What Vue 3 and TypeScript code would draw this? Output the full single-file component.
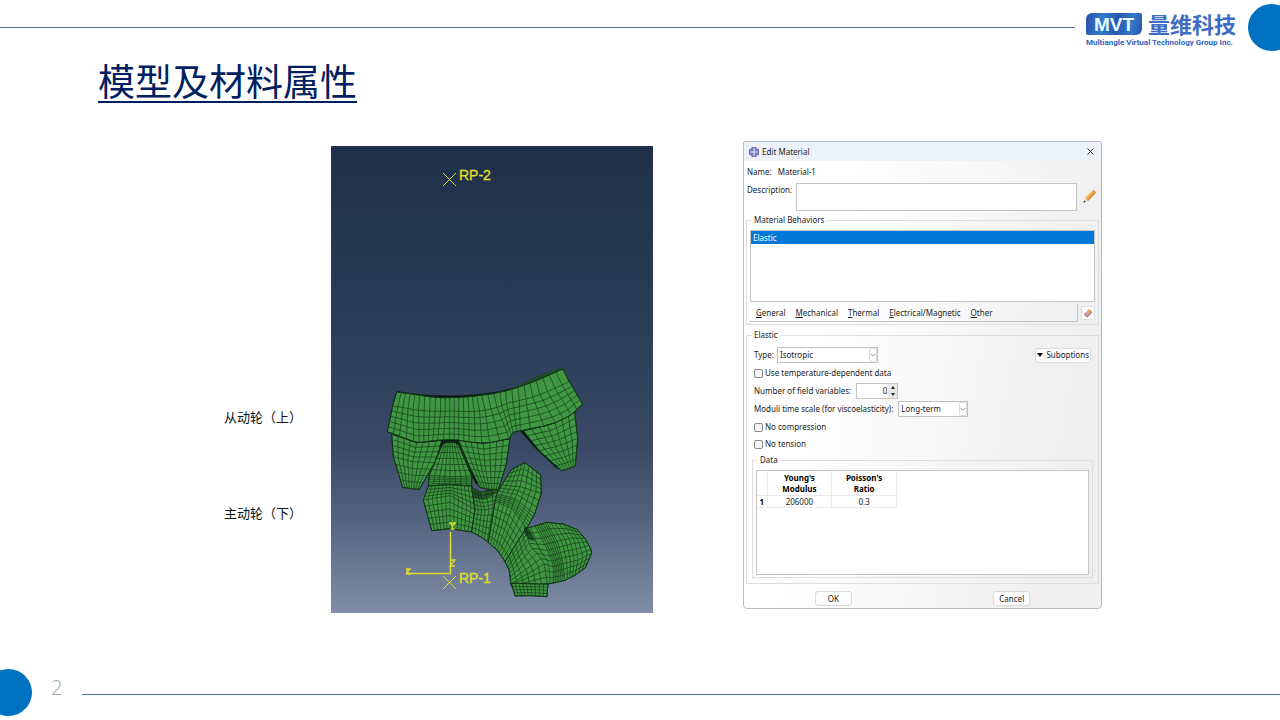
<script setup lang="ts">
import { ref } from 'vue'

type Pt = [number, number]
interface Patch { rows: Pt[][]; cols: number; steps: number[] }

const description = ref('')
const elasticType = ref('Isotropic')
const timeScale = ref('Long-term')
const fieldVars = ref(0)
const menus = ['General', 'Mechanical', 'Thermal', 'Electrical/Magnetic', 'Other']

// Each patch runs through key curves, split into cols x steps cells
const upper: Patch[] = [
  { cols: 8, steps: [4, 4], rows: [[[35,222],[110,248],[188,241]], [[40,290],[98,305],[164,308]], [[68,382],[95,386],[118,388]]] },
  { cols: 8, steps: [4, 4], rows: [[[235,240],[310,250],[390,236]], [[264,310],[315,318],[378,316]], [[300,383],[328,388],[355,389]]] },
  { cols: 7, steps: [4, 4], rows: [[[430,212],[515,193],[584,154]], [[478,272],[535,258],[593,235]], [[545,332],[566,326],[586,318]]] },
  { cols: 31, steps: [1, 5], rows: [
    [[50,96],[80,100],[110,104],[145,110],[180,113],[210,113],[240,112],[270,110],[300,106],[340,101],[380,92],[420,80],[460,65],[504,47],[548,27]],
    [[38,138],[72,143],[106,150],[143,153],[180,154],[210,153],[240,154],[275,155],[310,152],[350,143],[382,130],[425,120],[470,108],[520,87],[568,65]],
    [[22,215],[62,230],[110,248],[140,245],[170,241],[210,239],[240,241],[275,247],[320,250],[388,236],[400,216],[425,212],[515,193],[570,168],[608,132]]] },
]

const lower: Patch[] = [
  { cols: 8, steps: [6, 5], rows: [[[130,-25],[150,-30],[172,-25]], [[88,76],[150,80],[215,78]], [[85,108],[150,104],[215,108]]] },
  { cols: 12, steps: [4, 5], rows: [[[85,108],[150,104],[215,108]], [[70,150],[150,137],[225,178]], [[95,242],[150,236],[215,246]]] },
  { cols: 6, steps: [5, 5], rows: [[[215,112],[240,127],[295,115]], [[225,178],[255,180],[290,172]], [[215,246],[245,262],[270,280]]] },
  { cols: 8, steps: [4, 3, 5, 6], rows: [
    [[335,58],[375,38],[422,75]], [[305,105],[360,110],[424,130]], [[290,132],[345,145],[404,192]],
    [[285,155],[335,175],[380,235]], [[265,278],[292,301],[315,335]]] },
  { cols: 10, steps: [6, 2, 6, 4, 3], rows: [
    [[315,335],[328,362],[332,400],[335,410]], [[378,235],[388,285],[432,335],[442,402]], [[405,228],[438,290],[460,345],[460,399]],
    [[440,217],[475,280],[488,335],[495,391]], [[490,222],[522,268],[535,325],[525,376]], [[530,238],[557,268],[577,305],[556,353]]] },
  { cols: 9, steps: [4], rows: [[[334,400],[385,401],[444,402]], [[345,438],[390,437],[441,440]]] },
]

function sample(row: Pt[], t: number): Pt {
  const s = Math.min(t * (row.length - 1), row.length - 1.0001)
  const i = Math.floor(s)
  const f = s - i
  const a = row[i]
  const b = row[i + 1]
  return [a[0] + (b[0] - a[0]) * f, a[1] + (b[1] - a[1]) * f]
}

function build(p: Patch, ox: number, oy: number) {
  const levels: Pt[][] = []
  for (let r = 0; r < p.rows.length - 1; r++) {
    for (let k = r === 0 ? 0 : 1; k <= p.steps[r]; k++) {
      const f = k / p.steps[r]
      const level: Pt[] = []
      for (let c = 0; c <= p.cols; c++) {
        const a = sample(p.rows[r], c / p.cols)
        const b = sample(p.rows[r + 1], c / p.cols)
        level.push([ox + (a[0] + (b[0] - a[0]) * f) / 3, oy + (a[1] + (b[1] - a[1]) * f) / 3])
      }
      levels.push(level)
    }
  }
  const path = (pts: Pt[]) => 'M' + pts.map(q => q[0].toFixed(1) + ' ' + q[1].toFixed(1)).join('L')
  const last = levels[levels.length - 1]
  const outline = path([...levels[0], ...levels.map(l => l[p.cols]), ...[...last].reverse(), ...levels.map(l => l[0]).reverse()]) + 'Z'
  const lines = levels.map(path).join('') + levels[0].map((_, c) => path(levels.map(l => l[c]))).join('')
  return { outline, lines }
}

const upperMesh = upper.map(p => build(p, 380, 360))
const lowerMesh = lower.map(p => build(p, 400, 450))
</script>

<template>
  <div class="slide">
    <header class="top">
      <div class="rule"></div>
      <div class="logo">
        <div class="logo-row">
          <span class="mvt">MVT</span>
          <span class="brand">量维科技</span>
        </div>
        <div class="company">Multiangle Virtual Technology Group Inc.</div>
      </div>
      <div class="dot right"></div>
    </header>

    <h1>模型及材料属性</h1>

    <main class="content">
      <div class="labels">
        <p>从动轮（上）</p>
        <p>主动轮（下）</p>
      </div>

      <svg class="model" viewBox="331 146 322 467" role="img" aria-label="RP-1 RP-2">
        <defs>
          <linearGradient id="sky" x1="0" y1="0" x2="0" y2="1">
            <stop offset="0" stop-color="#20304a" />
            <stop offset="0.45" stop-color="#2c3f5b" />
            <stop offset="0.65" stop-color="#3a4966" />
            <stop offset="0.8" stop-color="#546380" />
            <stop offset="1" stop-color="#7f8da8" />
          </linearGradient>
        </defs>
        <rect x="331" y="146" width="322" height="467" fill="url(#sky)" />
        <path class="shade" d="M397 391 C430 397 466 397 500 391 C525 386 546 374 563 368 L564 371 C540 384 505 397 470 399 C440 400 415 397 397 393Z" />
        <path class="back" d="M507 390 C530 380 547 370 563 368 L563 371 L535 383Z" />
        <path class="shade" d="M520 431 L526 429 L541 450 L562 470 L556 468 L535 448Z" />
        <path class="shade" d="M441 441 L446 440 L438 454 L421 487 L419 490 L432 458Z M456 440 L461 440 L480 486 L476 484 L462 460Z" />
        <g v-for="(m, i) in lowerMesh" :key="'l' + i">
          <path class="face" :d="m.outline" />
          <path class="mesh" :d="m.lines" />
        </g>
        <path class="shade" d="M472 489 L482 493 L494 489 L496 484 L500 488 L494 495 L484 499 L474 498Z" opacity="0.5" />
        <path class="shade" d="M524 526 L530 530 L535 541 L530 540 L524 533Z" opacity="0.6" />
        <g v-for="(m, i) in upperMesh" :key="'u' + i">
          <path class="face" :d="m.outline" />
          <path class="mesh" :d="m.lines" />
        </g>
        <path class="shade" d="M441 440 L458 440 L461 447 L455 443 L446 443 L439 448Z" opacity="0.8" />
        <g class="axis">
          <path d="M450.500 532V573.500H407" />
          <path d="M443 173l13 13m0-13l-13 13M443 576l13 13m0-13l-13 13" stroke-width="1" />
          <path d="M449 523h7m-6 0l2.500 3 2.500-3m-2.500 3v3m-2 0h4M450 560h5l-5 6h5M406 569h5m-5 5h5m-4-5v5m3-5l-3 3 3 2" stroke-width="1.300" />
        </g>
        <text x="459" y="180">RP-2</text>
        <text x="459" y="583">RP-1</text>
      </svg>

      <section class="dialog" aria-label="Edit Material">
        <div class="titlebar">
          <svg class="app-icon" viewBox="0 0 10 10">
            <path d="M3 0h4v2h2v1h1v4H9v1H7v2H3V8H1V7H0V3h1V2h2z" fill="#7e82ba" />
            <path d="M5 1v8M1 5h8" stroke="#d4d6ee" stroke-width="1.200" />
            <path d="M3 0h4v2h2v1h1v4H9v1H7v2H3V8H1V7H0V3h1V2h2z" stroke="#55599c" stroke-width="0.7" fill="none" />
          </svg>
          <span>Edit Material</span>
          <button class="close" aria-label="Close">
            <svg viewBox="0 0 7 7"><path d="M.5.5l6 6m0-6l-6 6" stroke="#222" stroke-width="0.9" /></svg>
          </button>
        </div>

        <div class="name"><span>Name:</span><span>Material-1</span></div>

        <div class="desc">
          <label for="desc">Description:</label>
          <input id="desc" v-model="description" type="text" />
          <button class="pencil" aria-label="Edit description">
            <svg viewBox="0 0 14 14">
              <path d="M2 9l7.500-7.500 3 2.800L5 12z" fill="#f0b254" />
              <path d="M4 10.500L11 3l1.500 1.300L5 12z" fill="#d98a36" />
              <path d="M9.500 1.500l1-.8 3 2.600-1 1z" fill="#d98b7c" />
              <path d="M2 9l3 3-4.500 1.500z" fill="#f0d9b8" />
              <path d="M1.200 11.500l1.500 1.300L.3 13.700z" fill="#333" />
            </svg>
          </button>
        </div>

        <fieldset class="behaviors">
          <legend>Material Behaviors</legend>
          <div class="list" role="listbox" aria-label="Material Behaviors">
            <div class="item" role="option" aria-selected="true">Elastic</div>
          </div>
          <div class="menu-row">
            <nav class="menubar">
              <button v-for="m in menus" :key="m"><u>{{ m[0] }}</u>{{ m.slice(1) }}</button>
            </nav>
            <button class="eraser" aria-label="Delete">
              <svg viewBox="0 0 10 10">
                <path d="M1 6l5-5 3 2-5 5.500z" fill="#e2a365" />
                <path d="M1 6l2-2 3 2.300L4 8.500z" fill="#d6a0b5" />
                <path d="M4 8.500L9 3v1.500L4.300 9.500 1 7V6z" fill="#8a5f50" />
              </svg>
            </button>
          </div>
        </fieldset>

        <fieldset class="elastic">
          <legend>Elastic</legend>
          <div class="rows">
            <div class="row">
              <label for="type">Type:</label>
              <span class="select type">
                <select id="type" v-model="elasticType"><option>Isotropic</option></select>
                <svg viewBox="0 0 8 14"><path d="M1 5.500L4 8.500l3-3" /></svg>
              </span>
              <button class="btn sub"><i class="tri"></i>Suboptions</button>
            </div>
            <div class="row"><label><input type="checkbox" />Use temperature-dependent data</label></div>
            <div class="row wide">
              <label for="vars">Number of field variables:</label>
              <span class="spin">
                <input id="vars" v-model.number="fieldVars" type="number" min="0" />
                <span class="arrows">
                  <button aria-label="Increase" @click="fieldVars++"><i class="up"></i></button>
                  <button aria-label="Decrease" @click="fieldVars = Math.max(0, fieldVars - 1)"><i class="down"></i></button>
                </span>
              </span>
            </div>
            <div class="row wide">
              <label for="scale">Moduli time scale (for viscoelasticity):</label>
              <span class="select scale">
                <select id="scale" v-model="timeScale"><option>Long-term</option></select>
                <svg viewBox="0 0 8 14"><path d="M1 5.500L4 8.500l3-3" /></svg>
              </span>
            </div>
            <div class="row"><label><input type="checkbox" />No compression</label></div>
            <div class="row last"><label><input type="checkbox" />No tension</label></div>
          </div>
          <fieldset class="data">
            <legend>Data</legend>
            <div class="frame">
              <table>
                <thead>
                  <tr><th class="idx"></th><th>Young's<br />Modulus</th><th>Poisson's<br />Ratio</th></tr>
                </thead>
                <tbody>
                  <tr><th class="idx">1</th><td>206000</td><td>0.3</td></tr>
                </tbody>
              </table>
            </div>
          </fieldset>
        </fieldset>

        <div class="actions">
          <button class="btn">OK</button>
          <button class="btn">Cancel</button>
        </div>
      </section>
    </main>

    <footer class="bottom">
      <div class="dot left"></div>
      <span class="page">2</span>
      <div class="rule"></div>
    </footer>
  </div>
</template>

<style>
body { margin: 0; background: #fff; }
</style>

<style scoped>
* { box-sizing: border-box; }
.slide {
  min-height: 100vh;
  display: flex;
  flex-direction: column;
  overflow: hidden;
  background: #fff;
  font-family: "Noto Sans", "Noto Sans CJK SC", sans-serif;
}
.top { display: flex; align-items: center; height: 55px; }
.rule { flex: 1; height: 1px; background: #41719c; }
.dot { width: 47px; height: 47px; border-radius: 50%; background: #0070c0; flex: none; }
.dot.right { margin-right: -15px; }
.dot.left { margin-left: -15px; }
.logo { width: 152px; margin: 6px 10px 0 11px; color: #3465bd; white-space: nowrap; }
.logo-row { display: flex; align-items: flex-start; gap: 6px; height: 22px; margin-bottom: 2px; }
.mvt {
  width: 56px;
  height: 22px;
  border-radius: 6px 2px 6px 2px;
  background: linear-gradient(100deg, #2c50ae, #2f7cc8 30%, #2b55b4 55%, #3478c8 80%, #2e55b0);
  color: #e6fbff;
  font: bold 19px/23px "Liberation Sans", sans-serif;
  text-align: center;
}
.brand { font: bold 22px/20px "Noto Sans CJK SC", sans-serif; color: #3f6cc2; }
.company { font: bold 8px/12px Roboto, sans-serif; }
h1 {
  margin: 1px 0 37px 98px;
  align-self: flex-start;
  font: 400 37px/48px "Noto Sans CJK SC", sans-serif;
  color: #002060;
  text-decoration: underline;
  text-decoration-thickness: 2px;
  text-underline-offset: 5px;
}
.content {
  display: grid;
  grid-template-columns: 224fr 107fr 322fr 90fr 359fr 178fr;
  align-items: start;
}
.labels { grid-column: 2; padding-top: 266px; display: grid; gap: 76px; }
.labels p { margin: 0; font: 13px/20px "Noto Sans CJK SC", sans-serif; color: #111; white-space: nowrap; }
.model { grid-column: 3; width: 100%; height: auto; display: block; margin-top: 5px; }
.model text { font: 14px "Liberation Sans", sans-serif; fill: #e3e02c; stroke: #e3e02c; stroke-width: 0.3; }
.face { fill: #409642; stroke: #0d2a12; stroke-width: 1; }
.mesh { fill: none; stroke: #123d18; stroke-width: 0.7; }
.shade { fill: #071a10; }
.back { fill: #1f4a2a; }
.axis { fill: none; stroke: #e0dd2e; stroke-width: 1.5; }

.dialog {
  grid-column: 5;
  border: 1px solid #b9bdc1;
  border-radius: 2px 2px 4px 4px;
  background: linear-gradient(100deg, #fff 25%, #eee 90%);
  color: #1c1c1c;
  font-size: 8px;
  line-height: 12px;
}
.dialog button, .dialog input, .dialog select { font: inherit; color: inherit; margin: 0; }
.dialog button { padding: 0; border: 0; background: none; white-space: nowrap; }
.titlebar { display: flex; align-items: center; gap: 3px; height: 19px; padding: 0 7px 0 5px; background: #ecf2f8; }
.app-icon { width: 10px; height: 10px; }
.dialog .close { margin-left: auto; width: 7px; height: 7px; display: flex; }
.close svg { width: 7px; height: 7px; }
.name { display: flex; align-items: center; gap: 6px; height: 22px; padding: 0 3px; }
.desc { display: flex; height: 28px; padding: 0 4px 0 3px; gap: 4px; }
.desc label { line-height: 14px; white-space: nowrap; }
.desc input { flex: 1; min-width: 0; border: 1px solid #c4c4c4; background: #fff; padding: 0 3px; }
.dialog .pencil { width: 14px; height: 14px; margin: 6px 0 0 2px; }
.pencil svg { display: block; width: 14px; height: 14px; }
fieldset { min-width: 0; margin: 3px 2px 0; padding: 0; border: 1px solid #dedede; }
legend { margin: 0 0 0 1px; padding: 0 3px; height: 12px; }
.behaviors { padding: 4px 3px 2px; }
.list { height: 72px; border: 1px solid #c4c4c4; background: #fff; }
.item { height: 13px; padding: 0 2px; background: #0078d7; color: #fff; line-height: 13px; }
.menu-row { display: flex; gap: 3px; margin-top: 2px; }
.menubar { flex: 1; display: flex; gap: 10px; padding-left: 6px; height: 18px; border-right: 1px solid #c0c0c0; border-bottom: 1px solid #c0c0c0; }
.dialog .eraser { width: 14px; height: 14px; margin: 2px 0; border: 1px solid #ddd; border-radius: 2px; background: #fff; }
.eraser svg { display: block; width: 10px; height: 10px; margin: 1px; }
.elastic { margin-top: 4px; padding: 6px 5px 5px; }
.elastic > legend { margin-left: 0; padding-left: 2px; }
.rows { display: grid; gap: 2px; padding: 0 2px; }
.row { display: flex; align-items: center; gap: 3px; height: 16px; white-space: nowrap; }
.row.wide { gap: 5px; }
.row.last { height: 14px; }
.row label { display: flex; align-items: center; gap: 2px; }
.row input[type="checkbox"] { appearance: none; width: 9px; height: 9px; border: 1px solid #8a8a8a; border-radius: 2px; background: #f6f6f6; }
.select { display: flex; align-items: center; height: 16px; border: 1px solid #c0c0c0; background: #fff; }
.select select { flex: 1; min-width: 0; height: 14px; appearance: none; border: 0; background: none; padding: 0 2px; }
.select svg { width: 8px; height: 14px; border: 1px solid #ddd; border-radius: 2px; fill: none; stroke: #777; }
.type { width: 101px; }
.scale { width: 70px; }
.dialog .btn { height: 15px; border: 1px solid #dadada; border-radius: 3px; background: #fdfdfd; line-height: 12px; }
.dialog .sub { margin-left: auto; padding: 0 1px; display: flex; align-items: center; gap: 3px; }
.tri { border: 3px solid transparent; border-top: 4px solid #000; border-bottom: 0; }
.spin { display: flex; width: 42px; height: 16px; border: 1px solid #c4c4c4; background: #fff; }
.spin input { flex: 1; min-width: 0; border: 0; background: none; text-align: right; padding: 0 1px; appearance: textfield; }
.spin input::-webkit-inner-spin-button { display: none; }
.arrows { width: 9px; display: grid; background: #eaeaea; }
.arrows button { display: grid; place-items: center; height: 7px; }
.up, .down { border: 2px solid transparent; }
.up { border-bottom: 3px solid #222; border-top: 0; }
.down { border-top: 3px solid #222; border-bottom: 0; }
.data { margin: 3px 0 0; padding: 4px 3px 2px; }
.frame { height: 105px; border: 1px solid #c4c4c4; background: #fff; }
table { border-collapse: collapse; table-layout: fixed; width: 140px; line-height: 11px; text-align: center; }
th, td { padding: 1px 0; border-right: 1px solid #e9e9e9; border-bottom: 1px solid #e9e9e9; }
th { color: #000; }
.idx { width: 10px; }
tbody th, td { padding: 0; line-height: 11px; }
.actions { display: grid; grid-template-columns: 1fr 1fr; justify-items: center; padding: 7px 0 2px; }
.actions .btn { width: 37px; }

.bottom { margin-top: auto; display: flex; align-items: center; padding-bottom: 4px; }
.page { width: 50px; padding-left: 19px; font: 300 20px/30px "Open Sans", sans-serif; color: #a6a6a6; margin-top: -9px; }
.bottom .rule { margin-top: 3px; }
</style>
